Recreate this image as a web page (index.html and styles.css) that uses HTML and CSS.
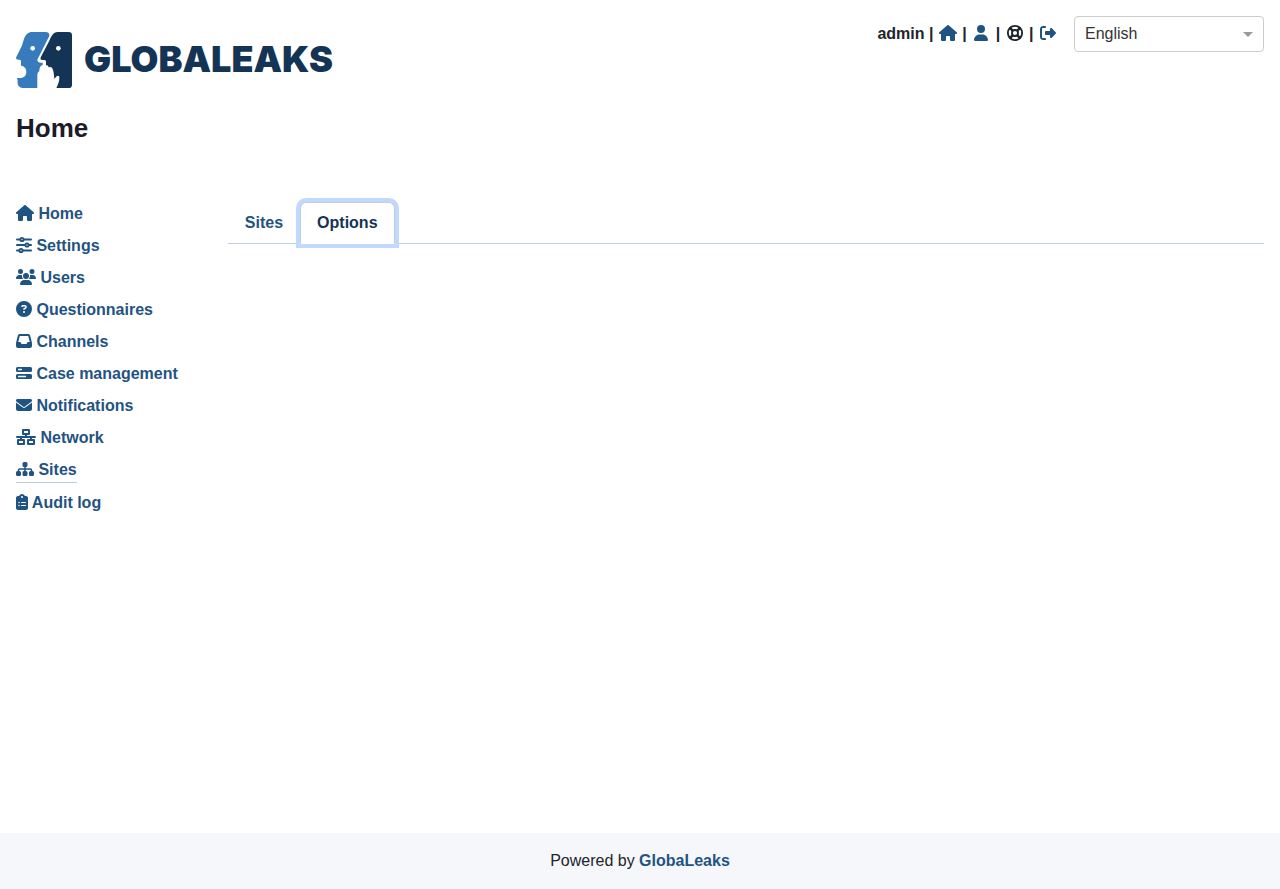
FILE: index.html
```html
<!DOCTYPE html>
<html lang="en">
<head>
<meta charset="utf-8">
<meta name="viewport" content="width=device-width, initial-scale=1">
<title>GlobaLeaks - Sites</title>
<link rel="stylesheet" href="styles.css">
</head>
<body>
<header class="header">
  <div class="brand">
    <a class="logo" href="#" aria-label="GlobaLeaks">
      <svg class="logo-mark" viewBox="18 18 168 168" aria-hidden="true">
        <path fill="#377bbc" d="M66 18H106C117 18 121 25 116 34L83 99C80 106 85 110 93 110H98V117C90 119 88 126 88 136C82 139 82 144 82 150V186H42C28 186 21 178 23 164L21 156L33 156C43 155 49 147 49 138C49 127 43 120 33 119V106C33 102 31 101 25 101C19 101 17 98 19 93L35 61C38 54 39 47 42 39C47 25 55 18 66 18Z"/>
        <path fill="#133454" d="M143 18H176Q186 18 186 28V176Q186 186 176 186H139C144 176 148 166 148 155C149 149 143 147 140 151L133 159C132 146 131 132 126 125C122 121 119 124 116 124C115 119 112 118 108 118V106C108 103 105 102 98 102C91 102 90 98 93 92L118 44C125 27 132 18 143 18Z"/>
        <circle cx="68" cy="67" r="7" fill="#fff"/>
        <circle cx="145" cy="67" r="7" fill="#fff"/>
      </svg>
      <span class="logo-text">GLOBALEAKS</span>
    </a>
    <h1 class="page-title">Home</h1>
  </div>
  <div class="toolbar">
    <div class="user-links">
      <span>admin</span> |
      <a href="#" aria-label="Home"><svg class="icon fixed" viewBox="-32 0 640 512"><use href="#i-home"/></svg></a> |
      <a href="#" aria-label="Preferences"><svg class="icon fixed" viewBox="-96 0 640 512"><path d="M224 256A128 128 0 1 0 224 0a128 128 0 1 0 0 256zm-45.700 48C79.800 304 0 383.800 0 482.300C0 498.700 13.300 512 29.700 512H418.300c16.400 0 29.700-13.300 29.700-29.700C448 383.800 368.200 304 269.700 304H178.300z"/></svg></a> |
      <a class="support" href="#" aria-label="Support"><svg class="icon fixed" viewBox="-64 0 640 512"><g fill="none" stroke="currentColor" stroke-width="60"><circle cx="256" cy="256" r="228"/><circle cx="256" cy="256" r="96"/><path stroke-width="80" d="M76 76L188 188M324 324L436 436M436 76L324 188M188 324L76 436"/></g></svg></a> |
      <a href="#" aria-label="Log out"><svg class="icon fixed" viewBox="-64 0 640 512"><path d="M378 106L501 229c7 7 11 17 11 27s-4 20-11 27L378 406c-6 6-15 10-24 10c-19 0-34-15-34-34v-62H192c-18 0-32-14-32-32v-64c0-18 14-32 32-32h128v-62c0-19 15-34 34-34c9 0 18 4 24 10zM160 96H96c-18 0-32 14-32 32v256c0 18 14 32 32 32h64c18 0 32 14 32 32s-14 32-32 32H96c-53 0-96-43-96-96V128C0 75 43 32 96 32h64c18 0 32 14 32 32s-14 32-32 32z"/></svg></a>
    </div>
    <div class="language">
      <select class="language-select" aria-label="Language"><option>English</option></select>
      <span class="caret"></span>
    </div>
  </div>
</header>

<div class="content">
  <nav class="sidebar" aria-label="Administration">
    <a href="#"><svg class="icon w18" viewBox="0 0 576 512"><path id="i-home" d="M576 256c0 18-15 32-32 32h-32l1 160V472c0 22-18 40-40 40H392c-22 0-40-18-40-40V384c0-18-14-32-32-32H256c-18 0-32 14-32 32v88c0 22-18 40-40 40H104c-22 0-40-18-40-40V288H32c-18 0-32-14-32-32c0-9 3-17 10-24L266 8c7-7 15-8 22-8s15 2 21 7L565 232c8 7 12 15 11 24z"/></svg> Home</a>
    <a href="#"><svg class="icon w16" viewBox="0 0 512 512"><g fill="none" stroke="currentColor" stroke-width="60" stroke-linecap="round"><path d="M30 80H136M248 80H482M30 256H296M408 256H482M30 432H104M216 432H482"/><circle cx="192" cy="80" r="52"/><circle cx="352" cy="256" r="52"/><circle cx="160" cy="432" r="52"/></g></svg> Settings</a>
    <a href="#"><svg class="icon w20" viewBox="0 0 640 512"><path d="M144 0a80 80 0 1 1 0 160A80 80 0 1 1 144 0zM512 0a80 80 0 1 1 0 160A80 80 0 1 1 512 0zM0 299C0 240 48 192 107 192h42c16 0 31 4 45 10c-1 7-2 14-2 22c0 38 17 72 43 96H21C10 320 0 310 0 299zM405 320c26-24 43-58 43-96c0-8-1-15-2-22c14-6 29-10 45-10h42C592 192 640 240 640 299c0 11-10 21-21 21H405zM224 224a96 96 0 1 1 192 0 96 96 0 1 1-192 0zM128 485C128 412 188 352 261 352H379C452 352 512 412 512 485c0 15-12 27-27 27H155c-15 0-27-12-27-27z"/></svg> Users</a>
    <a href="#"><svg class="icon w16" viewBox="0 0 512 512"><path fill-rule="evenodd" d="M256 512A256 256 0 1 0 256 0a256 256 0 1 0 0 512zM169.800 165.300c7.900-22.300 29.100-37.300 52.800-37.300h58.300c34.900 0 63.100 28.300 63.100 63.100c0 22.600-12.100 43.500-31.700 54.800L280 264.400c-.2 13-10.900 23.600-24 23.600c-13.300 0-24-10.700-24-24V250.500c0-8.600 4.600-16.500 12.100-20.800l44.300-25.400c4.700-2.700 7.600-7.700 7.600-13.100c0-8.400-6.800-15.100-15.100-15.100H222.600c-3.400 0-6.400 2.100-7.500 5.300l-.4 1.200c-4.400 12.500-18.200 19-30.600 14.600s-19-18.200-14.600-30.600zM224 352a32 32 0 1 1 64 0 32 32 0 1 1-64 0z"/></svg> Questionnaires</a>
    <a href="#"><svg class="icon w16" viewBox="0 0 512 512"><path fill-rule="evenodd" d="M121 32C92 32 66 52 59 80L2 308C1 314 0 319 0 324V416c0 35 29 64 64 64H448c35 0 64-29 64-64V324c0-5-1-10-2-16L453 80C446 52 420 32 391 32H121zm0 64H391l48 192H388c-12 0-23 7-29 18l-14 28c-5 11-16 18-29 18H196c-12 0-23-7-29-18l-14-28c-5-11-17-18-29-18H73z"/></svg> Channels</a>
    <a href="#"><svg class="icon w16" viewBox="0 0 512 512"><path fill-rule="evenodd" d="M48 64H464Q512 64 512 112V176Q512 224 464 224H48Q0 224 0 176V112Q0 64 48 64ZM48 288H464Q512 288 512 336V400Q512 448 464 448H48Q0 448 0 400V336Q0 288 48 288ZM72 120Q48 144 72 168H184Q208 144 184 120ZM72 344Q48 368 72 392H312Q336 368 312 344Z"/></svg> Case management</a>
    <a href="#"><svg class="icon w16" viewBox="0 0 512 512"><path d="M48 64C22 64 0 86 0 112c0 15 7 29 19 38L237 314c11 8 27 8 38 0L493 150c12-9 19-23 19-38c0-26-22-48-48-48H48zM0 176V384c0 35 29 64 64 64H448c35 0 64-29 64-64V176L294 339c-22 17-54 17-76 0L0 176z"/></svg> Notifications</a>
    <a href="#"><svg class="icon w20" viewBox="0 0 640 512"><g fill="none" stroke="currentColor" stroke-width="64" stroke-linejoin="round"><rect x="224" y="32" width="192" height="128"/><rect x="64" y="352" width="192" height="128"/><rect x="384" y="352" width="192" height="128"/><path stroke-linecap="round" d="M32 256H608M320 160V256M160 256V352M480 256V352"/></g></svg> Network</a>
    <a class="current" aria-current="page" href="#"><svg class="icon w18" viewBox="0 0 576 512"><path d="M256 32H320Q368 32 368 80V144Q368 192 320 192H312V232H456C494 232 520 258 520 296V320H528Q576 320 576 368V432Q576 480 528 480H464Q416 480 416 432V368Q416 320 464 320H472V296C472 286 466 280 456 280H312V320H320Q368 320 368 368V432Q368 480 320 480H256Q208 480 208 432V368Q208 320 256 320H264V280H120C110 280 104 286 104 296V320H112Q160 320 160 368V432Q160 480 112 480H48Q0 480 0 432V368Q0 320 48 320H56V296C56 258 82 232 120 232H264V192H256Q208 192 208 144V80Q208 32 256 32Z"/></svg> Sites</a>
    <a href="#"><svg class="icon w12" viewBox="0 0 384 512"><path fill-rule="evenodd" d="M192 0c-42 0-77 27-91 64H64C29 64 0 93 0 128V448c0 35 29 64 64 64H320c35 0 64-29 64-64V128c0-35-29-64-64-64H283C269 27 234 0 192 0zm0 64a32 32 0 1 1 0 64 32 32 0 1 1 0-64zM72 272a24 24 0 1 1 48 0 24 24 0 1 1-48 0zm104-16H304q16 0 16 16t-16 16H176q-16 0-16-16t16-16zM72 368a24 24 0 1 1 48 0 24 24 0 1 1-48 0zm88 0q0-16 16-16H304q16 0 16 16t-16 16H176q-16 0-16-16z"/></svg> Audit log</a>
  </nav>
  <main class="main">
    <div class="tabs" role="tablist">
      <button class="tab" type="button" role="tab" aria-selected="false">Sites</button>
      <button class="tab active" type="button" role="tab" aria-selected="true">Options</button>
    </div>
  </main>
</div>

<footer class="footer">Powered by <a href="#">GlobaLeaks</a></footer>
</body>
</html>
```
FILE: styles.css
```css
*, *::before, *::after { box-sizing: border-box; }

body {
  margin: 0;
  min-height: 100vh;
  display: flex;
  flex-direction: column;
  background: #fff;
  color: #212529;
  font: 16px/24px "Liberation Sans", Arial, sans-serif;
}

a { color: #1f5382; font-weight: 700; text-decoration: none; }

.header {
  display: flex;
  justify-content: space-between;
  align-items: flex-start;
  padding: 16px;
}

.logo { display: flex; align-items: center; gap: 12px; margin-top: 16px; }
.logo-mark { width: 56px; height: 56px; }
.logo-text { padding-bottom: 2px; color: #133454; font: 900 36px/48px Inter, sans-serif; }

.page-title { margin: 24px 0 0; color: #1b1b29; font-size: 26px; line-height: 32px; }

.toolbar { display: flex; align-items: center; gap: 16px; }
.user-links { font-weight: 700; }
.user-links .support { color: #212529; }

.icon { height: 16px; fill: currentColor; vertical-align: -2px; overflow: visible; }
.fixed, .w20 { width: 20px; }
.w18 { width: 18px; }
.w16 { width: 16px; }
.w12 { width: 12px; }

.language { position: relative; width: 190px; }
.language-select {
  display: block;
  width: 100%;
  height: 36px;
  padding: 0 10px;
  appearance: none;
  border: 1px solid #ccc;
  border-radius: 4px;
  background: #fff;
  color: #333;
  font: inherit;
}
.caret {
  position: absolute;
  top: 16px;
  right: 11px;
  border: 5px solid transparent;
  border-top-color: #999;
  border-bottom: 0;
  pointer-events: none;
}

.content { display: flex; flex: 1; gap: 50px; padding: 42px 16px 16px; }

.sidebar { display: flex; flex-direction: column; align-items: flex-start; gap: 8px; }
.sidebar a { white-space: nowrap; }
.sidebar .current { border-bottom: 1px solid #bccbdc; }

.main { flex: 1; min-width: 0; }
.tabs { display: flex; border-bottom: 1px solid #c0cddd; }
.tab {
  margin-bottom: -1px;
  padding: 8px 16px;
  border: 1px solid transparent;
  border-radius: 6px 6px 0 0;
  background: none;
  color: #1f5382;
  font: inherit;
  font-weight: 700;
}
.tab.active {
  border-color: #c0cddd #c0cddd #fff;
  background: #fff;
  box-shadow: 0 0 0 4px #c2d9fe;
  color: #133454;
}

.footer { padding: 16px; background: #f5f7fb; text-align: center; }
```
